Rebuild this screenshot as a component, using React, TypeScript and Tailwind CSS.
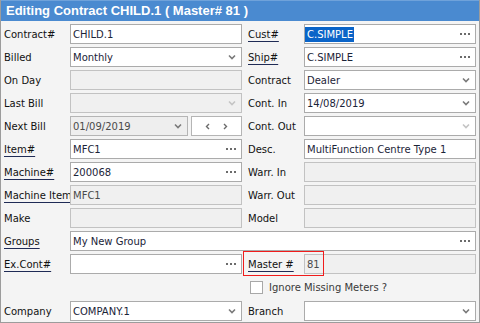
import React from "react";

const font = { fontFamily: '"DejaVu Sans", Verdana, sans-serif' };

function Dots() {
  return (
    <span className="ml-auto mr-[5px] flex gap-[2px] items-center">
      <span className="w-[2px] h-[2px] bg-[#6b6b6b]" />
      <span className="w-[2px] h-[2px] bg-[#6b6b6b]" />
      <span className="w-[2px] h-[2px] bg-[#6b6b6b]" />
    </span>
  );
}

function Chevron({ light }: { light?: boolean }) {
  return (
    <svg className="ml-auto mr-[5px]" width="8" height="6" viewBox="0 0 8 6">
      <path d="M1 1.5 L4 4.5 L7 1.5" fill="none" stroke={light ? "#c4c4c4" : "#7a7a7a"} strokeWidth="1.6" />
    </svg>
  );
}

type BoxProps = {
  value?: string;
  disabled?: boolean;
  kind?: "dots" | "chev" | "chevlight";
  className?: string;
  selected?: boolean;
};

function Box({ value, disabled, kind, className = "", selected }: BoxProps) {
  return (
    <div
      className={`h-[20px] flex items-center border ${
        disabled ? "bg-[#f0f0f0] border-[#c2c2c2] text-[#4a4a4a]" : "bg-white border-[#ababab] text-[#1b2438]"
      } ${className}`}
    >
      {value !== undefined && (
        <span className={`pl-[2px] whitespace-nowrap ${selected ? "bg-[#0a64c8] text-white pr-[1px]" : ""}`}>
          {value}
        </span>
      )}
      {kind === "dots" && <Dots />}
      {kind === "chev" && <Chevron />}
      {kind === "chevlight" && <Chevron light />}
    </div>
  );
}

function Label({ text, link, right }: { text: string; link?: boolean; right?: boolean }) {
  return (
    <div
      className={`${right ? "w-[62px] pl-[6px]" : "w-[66px]"} h-[20px] flex items-center whitespace-nowrap overflow-hidden text-[#111]`}
    >
      <span className={link ? "underline decoration-[#1f2b55] underline-offset-[3px]" : ""}>{text}</span>
    </div>
  );
}

function Row({ children }: { children: React.ReactNode }) {
  return <div className="flex h-[20px]">{children}</div>;
}

export default function App() {
  return (
    <div className="w-[480px] h-[323px] bg-[#f4f4f4] border-x border-b border-[#9c9c9c] overflow-hidden text-[10px]" style={font}>
      <div
        className="h-[21px] bg-[#4a8ad0] text-white font-bold text-[13px] pl-[5px] flex items-center border-t border-[#6fa2da]"
        style={{ fontFamily: '"Liberation Sans", Arial, sans-serif' }}
      >
        Editing Contract CHILD.1 ( Master# 81 )
      </div>
      <div className="relative flex flex-col gap-[3px] pt-[3px] px-[3px]">
        <Row>
          <Label text="Contract#" />
          <Box value="CHILD.1" className="w-[172px]" />
          <Label text="Cust#" link right />
          <Box value="C.SIMPLE" selected kind="dots" className="w-[172px]" />
        </Row>
        <Row>
          <Label text="Billed" />
          <Box value="Monthly" kind="chev" className="w-[172px]" />
          <Label text="Ship#" link right />
          <Box value="C.SIMPLE" kind="dots" className="w-[172px]" />
        </Row>
        <Row>
          <Label text="On Day" />
          <Box disabled className="w-[172px]" />
          <Label text="Contract" right />
          <Box value="Dealer" kind="chev" className="w-[172px]" />
        </Row>
        <Row>
          <Label text="Last Bill" />
          <Box disabled kind="chevlight" className="w-[172px]" />
          <Label text="Cont. In" right />
          <Box value="14/08/2019" kind="chev" className="w-[172px]" />
        </Row>
        <Row>
          <Label text="Next Bill" />
          <div className="w-[172px] flex gap-[3px]">
            <div className="w-[118px] h-[20px] flex items-center border border-[#b5b5b5] bg-[#eeeeee] text-[#4a4a4a]">
              <span className="pl-[2px]">01/09/2019</span>
              <Chevron />
            </div>
            <div className="flex-1 h-[20px] flex items-center justify-around border border-[#b5b5b5] bg-white px-[6px]">
              <svg width="5" height="7" viewBox="0 0 5 7">
                <path d="M4 1 L1.5 3.5 L4 6" fill="none" stroke="#6b6b6b" strokeWidth="1.4" />
              </svg>
              <svg width="5" height="7" viewBox="0 0 5 7">
                <path d="M1 1 L3.5 3.5 L1 6" fill="none" stroke="#6b6b6b" strokeWidth="1.4" />
              </svg>
            </div>
          </div>
          <Label text="Cont. Out" right />
          <Box kind="chevlight" className="w-[172px]" />
        </Row>
        <Row>
          <Label text="Item#" link />
          <Box value="MFC1" kind="dots" className="w-[172px]" />
          <Label text="Desc." right />
          <Box value="MultiFunction Centre Type 1" className="w-[172px]" />
        </Row>
        <Row>
          <Label text="Machine#" link />
          <Box value="200068" kind="dots" className="w-[172px]" />
          <Label text="Warr. In" right />
          <Box disabled className="w-[172px]" />
        </Row>
        <Row>
          <Label text="Machine Item" link />
          <Box value="MFC1" disabled className="w-[172px]" />
          <Label text="Warr. Out" right />
          <Box disabled className="w-[172px]" />
        </Row>
        <Row>
          <Label text="Make" />
          <Box disabled className="w-[172px]" />
          <Label text="Model" right />
          <Box disabled className="w-[172px]" />
        </Row>
        <Row>
          <Label text="Groups" link />
          <Box value="My New Group" kind="dots" className="w-[406px]" />
        </Row>
        <Row>
          <Label text="Ex.Cont#" link />
          <Box kind="dots" className="w-[172px]" />
          <Label text="Master #" link right />
          <Box value="81" disabled className="w-[172px]" />
        </Row>
        <div className="flex h-[20px] items-center pl-[246px]">
          <div className="w-[13px] h-[13px] border border-[#a8a8a8] bg-white" />
          <span className="ml-[6px] text-[#3a3a3a]">Ignore Missing Meters ?</span>
        </div>
        <div className="flex h-[20px] mt-[1px]">
          <Label text="Company" />
          <Box value="COMPANY.1" kind="chev" className="w-[172px]" />
          <Label text="Branch" right />
          <Box kind="chev" className="w-[172px]" />
        </div>
        <div
          className="absolute z-10 left-[242px] top-[230px] w-[81px] h-[25px] pointer-events-none"
          style={{ boxShadow: "inset 0 0 0 1px #f01c1c" }}
        />
      </div>
    </div>
  );
}
